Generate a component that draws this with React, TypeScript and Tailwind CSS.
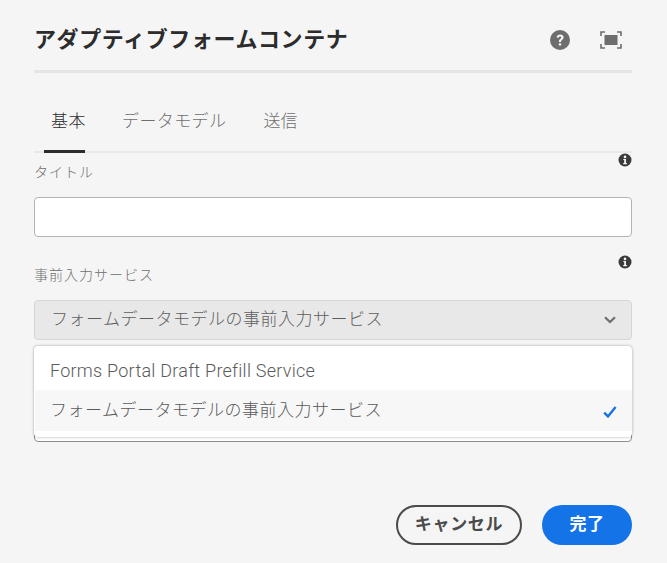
import React from 'react';

const fontStack = 'font-["Roboto","Noto_Sans_CJK_JP",sans-serif]';

const InfoIcon = () => (
    <svg width="14" height="14" viewBox="0 0 14 14" className="block">
        <circle cx="7" cy="7" r="6.5" fill="#3b3b3b" />
        <circle cx="7" cy="3.9" r="1.3" fill="#f5f5f5" />
        <path d="M5.3 6h2.7v4.1h.9v1.1H5.2v-1.1h1V7.1h-.9z" fill="#f5f5f5" />
    </svg>
);

const HelpIcon = () => (
    <svg width="20" height="20" viewBox="0 0 20 20" className="block">
        <circle cx="10" cy="10" r="10" fill="#6e6e6e" />
        <path d="M6.6 7.6c.2-2 1.6-3.2 3.6-3.2 2 0 3.4 1.2 3.4 2.9 0 1.3-.7 2-1.6 2.7-.7.5-1 .9-1 1.7v.4H8.9v-.6c0-1.2.5-1.9 1.3-2.5.7-.5 1.1-.9 1.1-1.5 0-.7-.5-1.1-1.2-1.1-.8 0-1.3.5-1.4 1.3z" fill="#f5f5f5" />
        <rect x="8.8" y="13.2" width="2.4" height="2.4" rx="0.6" fill="#f5f5f5" />
    </svg>
);

const FullscreenIcon = () => (
    <svg width="22" height="18" viewBox="0 0 22 18" className="block">
        <path d="M1 5V1h4M17 1h4v4M21 13v4h-4M5 17H1v-4" fill="none" stroke="#6e6e6e" strokeWidth="1.6" />
        <rect x="4.5" y="4" width="13" height="10" fill="#6e6e6e" />
    </svg>
);

const Label = ({ text, iconClass }: { text: string, iconClass?: string }) => (
    <div className="flex justify-between items-start">
        <span className="text-[14px] leading-[20px] tracking-[1px] font-light text-[#6e6e6e] mt-[9px]">{text}</span>
        <span className={`${iconClass ?? ''}`}><InfoIcon /></span>
    </div>
);

export default function App() {
    return (
        <div className={`w-[667px] h-[563px] bg-[#f5f5f5] pl-[34px] pr-[35px] relative overflow-hidden ${fontStack}`}>
            <div className="flex items-center justify-between h-[70px] pt-[8px]">
                <h1 className="text-[22px] tracking-[0.6px] font-bold text-[#2c2c2c] leading-[30px] whitespace-nowrap mt-[2px]">
                    アダプティブフォームコンテナ
                </h1>
                <div className="flex items-center gap-[30px] mr-[10px] mt-[2px]">
                    <HelpIcon />
                    <FullscreenIcon />
                </div>
            </div>
            <div className="h-[3px] bg-[#e4e4e4]" />

            <div className="flex mt-[33px] h-[47px] border-b-2 border-[#e9e9e9] pl-[10px]">
                <div className="relative w-[41px] pl-[7px] text-[17px] tracking-[0.5px] leading-[30px] font-light text-[#2c2c2c] whitespace-nowrap">
                    基本
                    <div className="absolute left-0 right-0 bottom-[-2px] h-[3px] bg-[#2c2c2c]" />
                </div>
                <div className="ml-[37px] text-[17px] tracking-[0.4px] leading-[30px] font-light text-[#6e6e6e]">データモデル</div>
                <div className="ml-[37px] text-[17px] tracking-[0.2px] leading-[30px] font-light text-[#6e6e6e]">送信</div>
            </div>

            <Label text="タイトル" />
            <div className="mt-[15px] h-[40px] rounded-[4px] border border-[#b3b3b3] bg-white" />

            <div className="mt-[19px]"><Label text="事前入力サービス" iconClass="-mt-[1px]" /></div>
            <div className="mt-[15px] h-[40px] rounded-[4px] border border-[#d6d6d6] bg-[#e8e8e8] flex items-center justify-between pl-[16px] pr-[15px]">
                <span className="text-[17px] tracking-[0.5px] font-light text-[#5f5f5f] whitespace-nowrap">フォームデータモデルの事前入力サービス</span>
                <svg width="12" height="8" viewBox="0 0 12 8"><path d="M1 1.2 6 6l5-4.8" fill="none" stroke="#6e6e6e" strokeWidth="2.2" /></svg>
            </div>

            <div className="mt-[6px] relative h-[96px]">
                <div className="absolute left-0 right-0 bottom-0 h-[40px] rounded-[4px] border border-[#8e8e8e] bg-white" />
                <div className="absolute left-0 right-0 top-0 h-[91px] rounded-[4px] bg-white shadow-[0_0_3px_rgba(0,0,0,0.35)] pt-[7px]">
                    <div className="h-[37px] pb-[2px] flex items-center pl-[16px] text-[18px] tracking-[0.25px] font-light text-[#5a5a5a] whitespace-nowrap">
                        Forms Portal Draft Prefill Service
                    </div>
                    <div className="h-[41px] ml-[1px] bg-[#f7f7f7] flex items-center justify-between pl-[15px] pr-[15px]">
                        <span className="text-[17px] tracking-[0.5px] font-light text-[#5a5a5a] whitespace-nowrap">フォームデータモデルの事前入力サービス</span>
                        <svg width="14" height="12" viewBox="0 0 14 12" className="mt-[2px]"><path d="M1.2 6.6 5 10.4 12.6 1" fill="none" stroke="#1473e6" strokeWidth="2.4" /></svg>
                    </div>
                </div>
            </div>

            <div className="absolute right-[35px] top-[505px] flex gap-[20px]">
                <button className="w-[126px] h-[40px] rounded-full border-2 border-[#4b4b4b] text-[17px] font-bold tracking-[0.7px] text-[#4b4b4b]">キャンセル</button>
                <button className="w-[90px] h-[40px] rounded-full bg-[#1473e6] text-[17px] font-bold tracking-[0.5px] text-white">完了</button>
            </div>
        </div>
    );
}
